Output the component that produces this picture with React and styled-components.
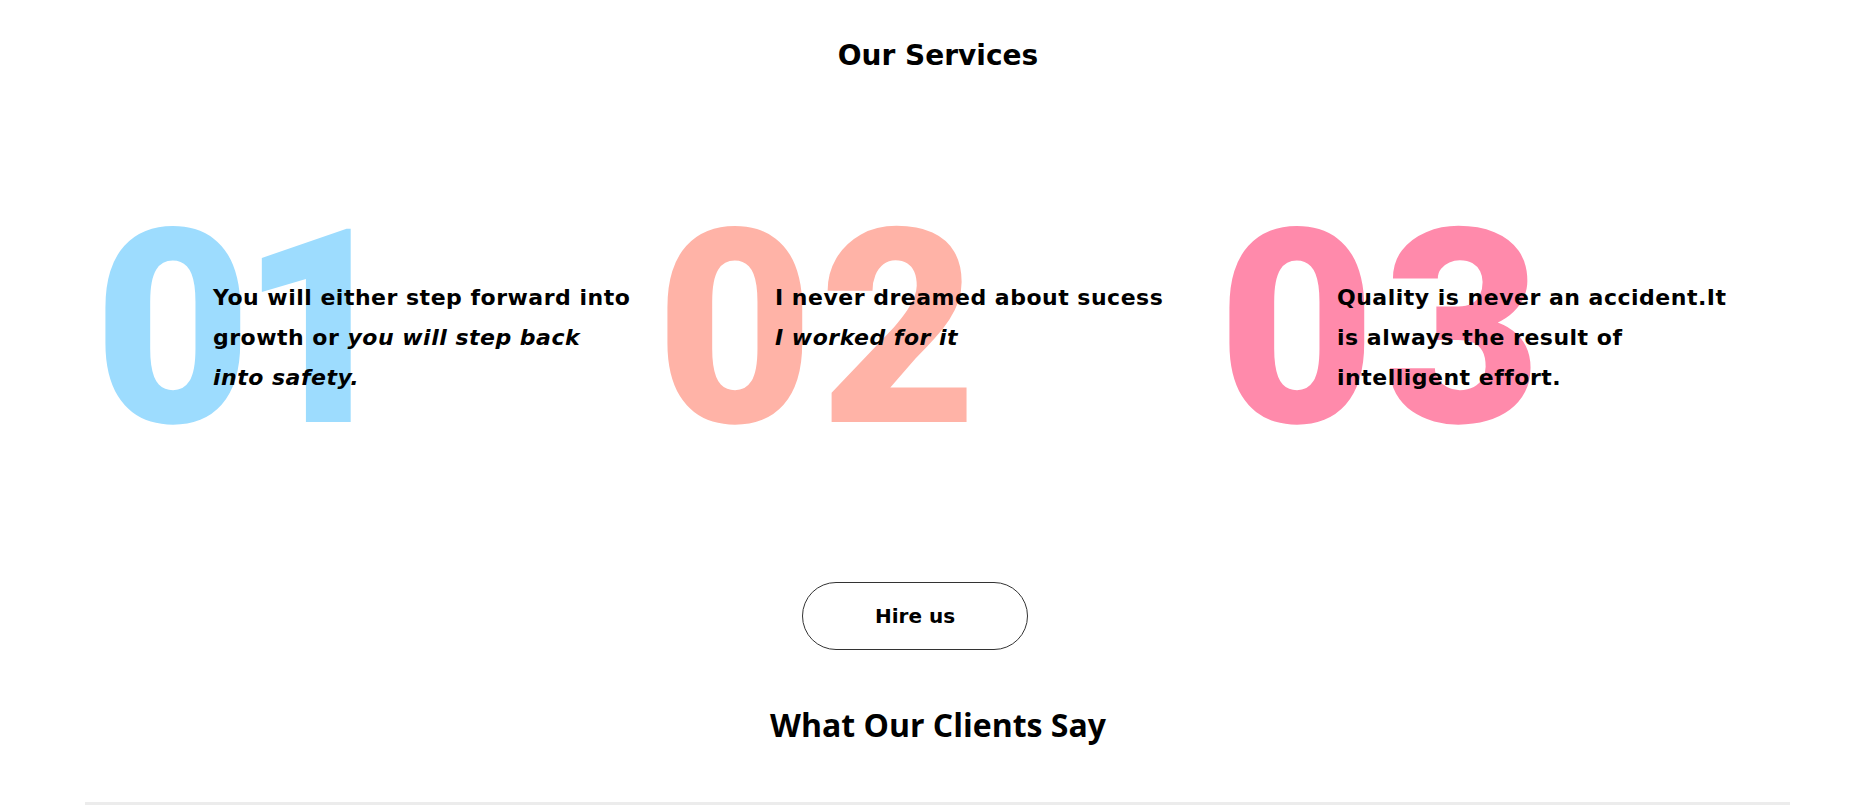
import React from 'react';
import styled, { createGlobalStyle } from 'styled-components';

const GlobalStyle = createGlobalStyle`
  body {
    margin: 0;
    background: #fff;
    font-family: 'DejaVu Sans', 'Liberation Sans', sans-serif;
    color: #000;
  }
`;

const Page = styled.main`
  width: 1876px;
  height: 805px;
  overflow: hidden;
  padding-top: 36px;
  box-sizing: border-box;
`;

const Heading = styled.h2`
  margin: 0;
  text-align: center;
  font-family: 'DejaVu Sans', sans-serif;
  font-size: 28px;
  line-height: 40px;
  font-weight: 700;
`;

const ClientsHeading = styled.h2`
  margin: 55px 0 0;
  text-align: center;
  font-family: 'Open Sans', sans-serif;
  font-size: 32px;
  line-height: 40px;
  font-weight: 700;
`;

const Cards = styled.div`
  display: grid;
  grid-template-columns: repeat(3, 562px);
  padding-left: 100px;
  margin-top: 202px;
  min-height: 240px;
`;

const Card = styled.div`
  position: relative;
  padding-left: 113px;
`;

const Number = styled.span`
  position: absolute;
  left: -6px;
  top: -85px;
  font-family: 'Roboto', 'Liberation Sans', sans-serif;
  font-weight: 900;
  font-size: 272px;
  line-height: 272px;
  letter-spacing: ${props => props.spacing}px;
  color: ${props => props.color};
  user-select: none;
`;

const Quote = styled.p`
  position: relative;
  margin: 0;
  font-size: 22px;
  line-height: 40px;
  font-weight: 700;
  letter-spacing: 0.5px;
  white-space: nowrap;

  em {
    font-style: italic;
  }
`;

const Actions = styled.div`
  display: flex;
  justify-content: center;
  padding-right: 46px;
  margin-top: 64px;
`;

const HireButton = styled.button`
  width: 226px;
  height: 68px;
  border: 1px solid #333;
  border-radius: 34px;
  background: #fff;
  font-family: 'DejaVu Sans', sans-serif;
  font-size: 20px;
  font-weight: 700;
  color: #000;
  cursor: pointer;
`;

const Divider = styled.div`
  margin: 57px 86px 0 85px;
  height: 6px;
  background: #ececec;
`;

const services = [
  {
    num: '01',
    color: '#9ddcfe',
    spacing: -12,
    text: (
      <>
        You will either step forward into
        <br />
        growth or <em>you will step back</em>
        <br />
        <em>into safety.</em>
      </>
    ),
  },
  {
    num: '02',
    color: '#ffb3a7',
    spacing: 6,
    text: (
      <>
        I never dreamed about sucess
        <br />
        <em>I worked for it</em>
      </>
    ),
  },
  {
    num: '03',
    color: '#ff8aab',
    spacing: 8,
    text: (
      <>
        Quality is never an accident.It
        <br />
        is always the result of
        <br />
        intelligent effort.
      </>
    ),
  },
];

export default function App() {
  return (
    <Page>
      <GlobalStyle />
      <Heading>Our Services</Heading>
      <Cards>
        {services.map(s => (
          <Card key={s.num}>
            <Number color={s.color} spacing={s.spacing}>
              {s.num}
            </Number>
            <Quote>{s.text}</Quote>
          </Card>
        ))}
      </Cards>
      <Actions>
        <HireButton>Hire us</HireButton>
      </Actions>
      <ClientsHeading>What Our Clients Say</ClientsHeading>
      <Divider />
    </Page>
  );
}
